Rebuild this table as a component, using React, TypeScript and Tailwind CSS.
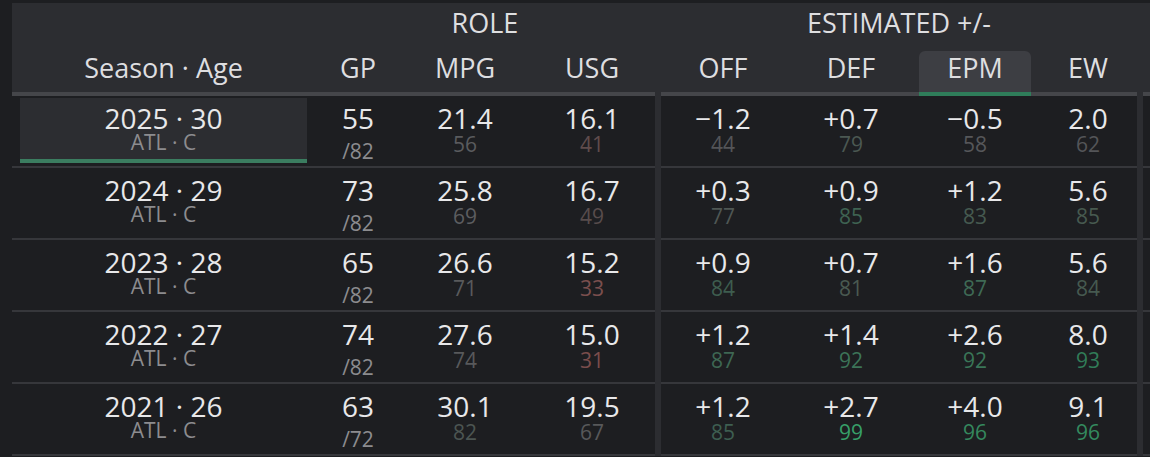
import React from "react";

type Stat = { v: string; p: string; c: string };
type Row = {
  season: string;
  team: string;
  gp: string;
  gpOf: string;
  mpg: Stat;
  usg: Stat;
  off: Stat;
  def: Stat;
  epm: Stat;
  ew: Stat;
};

const rows: Row[] = [
  {
    season: "2025 · 30",
    team: "ATL · C",
    gp: "55",
    gpOf: "/82",
    mpg: { v: "21.4", p: "56", c: "text-[#5a5b5e]" },
    usg: { v: "16.1", p: "41", c: "text-[#604c4c]" },
    off: { v: "−1.2", p: "44", c: "text-[#545558]" },
    def: { v: "+0.7", p: "79", c: "text-[#4b5852]" },
    epm: { v: "−0.5", p: "58", c: "text-[#56575a]" },
    ew: { v: "2.0", p: "62", c: "text-[#545558]" },
  },
  {
    season: "2024 · 29",
    team: "ATL · C",
    gp: "73",
    gpOf: "/82",
    mpg: { v: "25.8", p: "69", c: "text-[#5c5d60]" },
    usg: { v: "16.7", p: "49", c: "text-[#584c4c]" },
    off: { v: "+0.3", p: "77", c: "text-[#4f5754]" },
    def: { v: "+0.9", p: "85", c: "text-[#3f6352]" },
    epm: { v: "+1.2", p: "83", c: "text-[#465a50]" },
    ew: { v: "5.6", p: "85", c: "text-[#475a50]" },
  },
  {
    season: "2023 · 28",
    team: "ATL · C",
    gp: "65",
    gpOf: "/82",
    mpg: { v: "26.6", p: "71", c: "text-[#595a5c]" },
    usg: { v: "15.2", p: "33", c: "text-[#7b4f4e]" },
    off: { v: "+0.9", p: "84", c: "text-[#3e5d4f]" },
    def: { v: "+0.7", p: "81", c: "text-[#4a5a51]" },
    epm: { v: "+1.6", p: "87", c: "text-[#3f6a55]" },
    ew: { v: "5.6", p: "84", c: "text-[#465a50]" },
  },
  {
    season: "2022 · 27",
    team: "ATL · C",
    gp: "74",
    gpOf: "/82",
    mpg: { v: "27.6", p: "74", c: "text-[#58595b]" },
    usg: { v: "15.0", p: "31", c: "text-[#7a4d4c]" },
    off: { v: "+1.2", p: "87", c: "text-[#3e6753]" },
    def: { v: "+1.4", p: "92", c: "text-[#3c7458]" },
    epm: { v: "+2.6", p: "92", c: "text-[#3a7658]" },
    ew: { v: "8.0", p: "93", c: "text-[#317c58]" },
  },
  {
    season: "2021 · 26",
    team: "ATL · C",
    gp: "63",
    gpOf: "/72",
    mpg: { v: "30.1", p: "82", c: "text-[#4c5552]" },
    usg: { v: "19.5", p: "67", c: "text-[#57585a]" },
    off: { v: "+1.2", p: "85", c: "text-[#3e5f51]" },
    def: { v: "+2.7", p: "99", c: "text-[#37a069]" },
    epm: { v: "+4.0", p: "96", c: "text-[#35885e]" },
    ew: { v: "9.1", p: "96", c: "text-[#348a5f]" },
  },
];

function StatCell({ s, className }: { s: Stat; className: string }) {
  return (
    <div className={`flex flex-col items-center pt-[8px] ${className}`}>
      <span className="text-[28px] leading-[28px] text-[#e8e8ea]">{s.v}</span>
      <span className={`mt-[2px] text-[21px] leading-[20px] ${s.c}`}>{s.p}</span>
    </div>
  );
}

function HeadCell({ label, className }: { label: string; className: string }) {
  return (
    <div className={`border-b-4 border-[#45464a] pt-[3px] text-center ${className}`}>
      {label}
    </div>
  );
}

function Separator() {
  return <div className="w-[6px] shrink-0 self-stretch bg-[#2c2d31]" />;
}

function RoleGroup() {
  return (
    <div className="flex w-[643px] shrink-0 flex-col">
      <div className="bg-[#2c2d31]">
        <div className="flex h-[46px] pt-[4px]">
          <div className="w-[303px]" />
          <div className="flex-1 text-center">ROLE</div>
        </div>
        <div className="flex h-[47px]">
          <HeadCell label="Season · Age" className="w-[303px]" />
          <HeadCell label="GP" className="w-[86px]" />
          <HeadCell label="MPG" className="w-[128px]" />
          <HeadCell label="USG" className="w-[126px]" />
        </div>
      </div>
      {rows.map((r, i) => (
        <div key={r.season} className="flex h-[72px] border-b-2 border-[#36373b]">
          <div className="w-[303px] px-[8px] pb-[3px] pt-[2px]">
            <div
              className={`flex h-full flex-col items-center pt-[6px] ${
                i === 0 ? "border-b-4 border-[#3b7d60] bg-[#2c2d31]" : ""
              }`}
            >
              <span className="text-[28px] leading-[28px] text-[#e8e8ea]">{r.season}</span>
              <span className="text-[21px] leading-[20px] text-[#8c8c8f]">{r.team}</span>
            </div>
          </div>
          <div className="flex w-[86px] flex-col items-center pt-[8px]">
            <span className="text-[28px] leading-[28px] text-[#e8e8ea]">{r.gp}</span>
            <span className="mt-[9px] text-[21px] leading-[20px] text-[#8c8c8f]">{r.gpOf}</span>
          </div>
          <StatCell s={r.mpg} className="w-[128px]" />
          <StatCell s={r.usg} className="w-[126px]" />
        </div>
      ))}
    </div>
  );
}

function EstimateGroup() {
  return (
    <div className="flex w-[476px] shrink-0 flex-col">
      <div className="bg-[#2c2d31]">
        <div className="h-[46px] pt-[4px] text-center">ESTIMATED +/-</div>
        <div className="flex h-[47px]">
          <HeadCell label="OFF" className="w-[124px]" />
          <HeadCell label="DEF" className="w-[132px]" />
          <div className="flex w-[116px] items-end border-b-4 border-[#45464a] px-[2px]">
            <div className="-mb-[4px] h-[45px] w-full rounded-t-[6px] border-b-4 border-[#2f7d5a] bg-[#3d3e43] pt-[1px] text-center">
              EPM
            </div>
          </div>
          <HeadCell label="EW" className="w-[104px] pl-[6px]" />
        </div>
      </div>
      {rows.map((r) => (
        <div key={r.season} className="flex h-[72px] border-b-2 border-[#36373b]">
          <StatCell s={r.off} className="w-[124px]" />
          <StatCell s={r.def} className="w-[132px]" />
          <StatCell s={r.epm} className="w-[116px]" />
          <StatCell s={r.ew} className="w-[104px] pl-[6px]" />
        </div>
      ))}
    </div>
  );
}

function NextGroup() {
  return (
    <div className="flex min-w-0 flex-1 flex-col">
      <div className="h-[93px] border-b-4 border-[#45464a] bg-[#2c2d31]" />
      {rows.map((r) => (
        <div key={r.season} className="h-[72px] border-b-2 border-[#36373b]" />
      ))}
    </div>
  );
}

export default function App() {
  return (
    <div className="h-[457px] w-[1150px] overflow-hidden bg-[#1d1e21] pl-[12px] pt-[3px] font-['Open_Sans',sans-serif] text-[27px] leading-[32px] text-[#dedee0]">
      <div className="flex">
        <RoleGroup />
        <Separator />
        <EstimateGroup />
        <Separator />
        <NextGroup />
      </div>
    </div>
  );
}
